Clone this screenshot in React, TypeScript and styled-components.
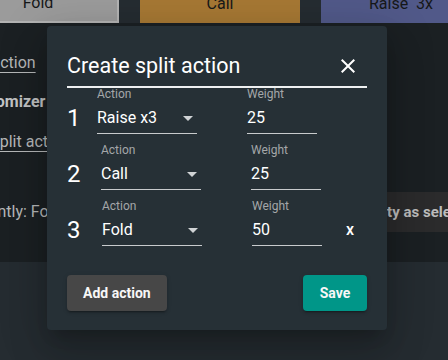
import React from "react";
import styled, { createGlobalStyle } from "styled-components";

const Global = createGlobalStyle`
  html, body { margin: 0; padding: 0; background: #252c31; }
  body { font-family: Roboto, "Noto Sans", sans-serif; overflow: hidden; }
  * { box-sizing: border-box; }
`;

const Viewport = styled.div`
  position: relative;
  width: 448px;
  height: 360px;
  overflow: hidden;
  background: #252c31;
`;

const Scroller = styled.div`
  margin-left: -41px;
  width: 560px;
`;

const TopBar = styled.div`
  display: flex;
  gap: 21px;
  margin-top: -17px;
`;

const ChoiceButton = styled.div<{ $bg: string; $edge?: string }>`
  width: 160px;
  height: 40px;
  display: flex;
  align-items: center;
  justify-content: center;
  background: ${(p) => p.$bg};
  color: #161819;
  font-size: 16px;
  white-space: pre;
  border-right: ${(p) => (p.$edge ? `2px solid ${p.$edge}` : "none")};
  border-bottom: ${(p) => (p.$edge ? `2px solid ${p.$edge}` : "none")};
`;

const Section = styled.section`
  background: #1b2023;
  height: 239px;
  padding-top: 27.5px;
`;

const LinkList = styled.div`
  display: flex;
  flex-direction: column;
  align-items: flex-start;
  gap: 15.5px;
`;

const TextLink = styled.a`
  font-size: 16px;
  line-height: 24px;
  color: #b6b8b9;
  text-decoration: underline;
  text-underline-offset: 4px;
  text-decoration-thickness: 1px;
`;

const Strong = styled.span`
  font-size: 16px;
  line-height: 24px;
  font-weight: 700;
  color: #c2c4c5;
`;

const StatusRow = styled.div`
  display: grid;
  grid-template-columns: 327px auto;
  align-items: center;
  margin-top: 38.5px;
  height: 40px;
`;

const StatusText = styled.span`
  font-size: 16px;
  line-height: 24px;
  color: #b6b8b9;
`;

const GhostButton = styled.div`
  height: 40px;
  padding: 0 16px;
  display: flex;
  align-items: center;
  background: #2b2b2c;
  color: #bcbcbc;
  font-size: 15px;
  font-weight: 700;
  white-space: nowrap;
  border-radius: 4px;
`;

const Dialog = styled.div`
  position: absolute;
  left: 47px;
  top: 26px;
  width: 340px;
  padding: 20px 20px 19px;
  background: #263036;
  border-radius: 4px;
  box-shadow: 0 11px 15px -7px rgba(0, 0, 0, 0.2), 0 24px 38px 3px rgba(0, 0, 0, 0.14),
    0 9px 46px 8px rgba(0, 0, 0, 0.12);
`;

const Header = styled.div`
  display: flex;
  align-items: center;
  justify-content: space-between;
  height: 42px;
  border-bottom: 2px solid #eef0f1;
`;

const Title = styled.h2`
  margin: 0;
  font-size: 21.5px;
  font-weight: 400;
  line-height: 28px;
  color: #ffffff;
`;

const CloseButton = styled.button`
  width: 24px;
  height: 24px;
  margin-right: 7px;
  padding: 0;
  border: none;
  background: none;
  display: flex;
  color: #ffffff;
`;

const Rows = styled.div`
  display: flex;
  flex-direction: column;
  gap: 10px;
`;

const Row = styled.div`
  display: flex;
  align-items: flex-end;
`;

const Index = styled.div<{ $w: number }>`
  width: ${(p) => p.$w}px;
  font-size: 24px;
  line-height: 24px;
  padding-bottom: 4px;
  color: #ffffff;
`;

const Fields = styled.div`
  display: flex;
  align-items: flex-end;
  gap: 50px;
`;

const Field = styled.div<{ $w: number }>`
  width: ${(p) => p.$w}px;
  display: flex;
  flex-direction: column;
  gap: 5px;
`;

const Label = styled.span`
  font-size: 12px;
  line-height: 13px;
  color: #a4a7a9;
`;

const Control = styled.div`
  height: 28px;
  padding-bottom: 3px;
  border-bottom: 1px solid #c8cbcd;
  display: flex;
  align-items: center;
  justify-content: space-between;
  font-size: 16px;
  line-height: 24px;
  color: #ffffff;
`;

const Arrow = styled.svg`
  width: 10px;
  height: 5px;
  margin-right: 4px;
  fill: #d0d3d5;
`;

const Remove = styled.span`
  margin-left: 24px;
  padding-bottom: 4px;
  font-size: 16px;
  line-height: 24px;
  font-weight: 500;
  color: #ffffff;
`;

const Footer = styled.div`
  display: flex;
  justify-content: space-between;
  margin-top: 29px;
`;

const Button = styled.button<{ $bg: string }>`
  height: 36px;
  min-width: 64px;
  padding: 0 16px;
  border: none;
  border-radius: 4px;
  background: ${(p) => p.$bg};
  color: #f7f7f7;
  font-family: Roboto, sans-serif;
  font-size: 14px;
  font-weight: 700;
  box-shadow: 0 3px 1px -2px rgba(0, 0, 0, 0.2), 0 2px 2px 0 rgba(0, 0, 0, 0.14),
    0 1px 5px 0 rgba(0, 0, 0, 0.12);
`;

const rows = [
  { n: "1", w: 30, action: "Raise x3", weight: "25", removable: false },
  { n: "2", w: 34, action: "Call", weight: "25", removable: false },
  { n: "3", w: 35, action: "Fold", weight: "50", removable: true },
];

export default function App() {
  return (
    <Viewport>
      <Global />
      <Scroller>
        <TopBar>
          <ChoiceButton $bg="#9b9b9b" $edge="#b3b3b3">Fold</ChoiceButton>
          <ChoiceButton $bg="#a67834">Call</ChoiceButton>
          <ChoiceButton $bg="#515989">{"Raise  3x"}</ChoiceButton>
        </TopBar>
        <Section>
          <LinkList>
            <TextLink>Add action</TextLink>
            <Strong>Randomizer</Strong>
            <TextLink>Add split action</TextLink>
          </LinkList>
          <StatusRow>
            <StatusText>Currently: Fold</StatusText>
            <GhostButton>Set probability as selected</GhostButton>
          </StatusRow>
        </Section>
      </Scroller>

      <Dialog>
        <Header>
          <Title>Create split action</Title>
          <CloseButton aria-label="close">
            <svg width="24" height="24" viewBox="0 0 24 24" fill="currentColor">
              <path d="M19 6.41 17.59 5 12 10.59 6.41 5 5 6.41 10.59 12 5 17.59 6.41 19 12 13.41 17.59 19 19 17.59 13.41 12z" />
            </svg>
          </CloseButton>
        </Header>
        <Rows>
          {rows.map((r) => (
            <Row key={r.n}>
              <Index $w={r.w}>{r.n}</Index>
              <Fields>
                <Field $w={100}>
                  <Label>Action</Label>
                  <Control>
                    <span>{r.action}</span>
                    <Arrow viewBox="0 0 10 5">
                      <path d="M0 0l5 5 5-5z" />
                    </Arrow>
                  </Control>
                </Field>
                <Field $w={70}>
                  <Label>Weight</Label>
                  <Control>
                    <span>{r.weight}</span>
                  </Control>
                </Field>
              </Fields>
              {r.removable && <Remove>x</Remove>}
            </Row>
          ))}
        </Rows>
        <Footer>
          <Button $bg="#474747">Add action</Button>
          <Button $bg="#009688">Save</Button>
        </Footer>
      </Dialog>
    </Viewport>
  );
}
